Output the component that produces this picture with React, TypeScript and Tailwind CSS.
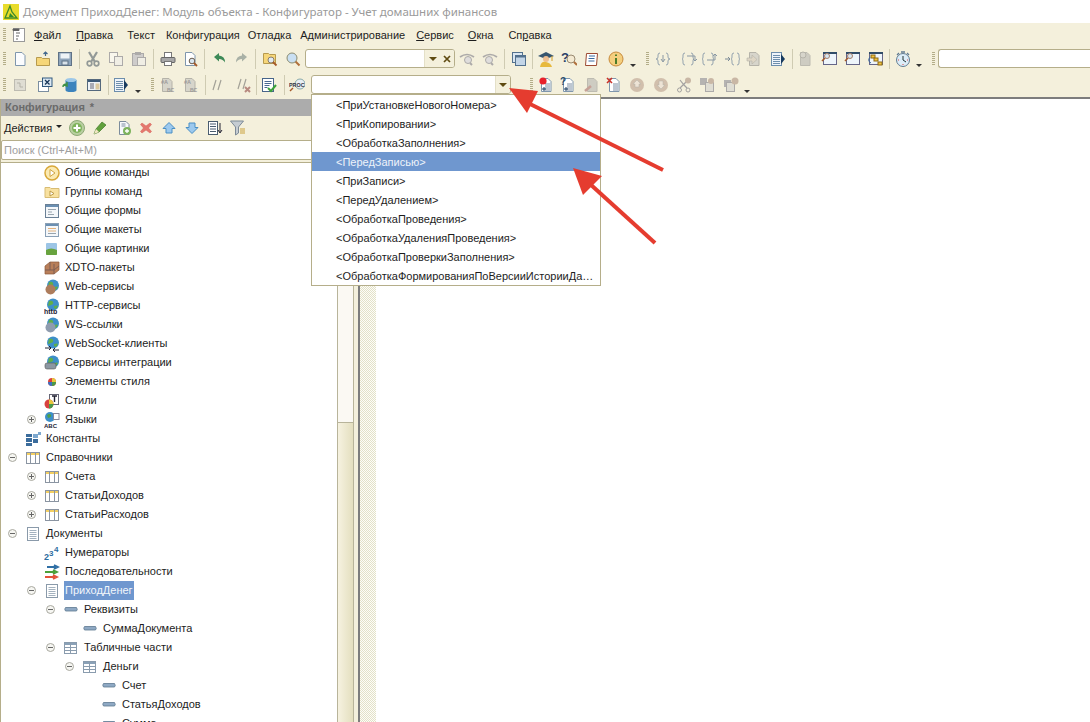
import React from "react";

const F = "font-['Liberation_Sans',sans-serif]";

const Doc = ({ f = "#fff", s = "#7f96ad" }: { f?: string; s?: string }) => (
  <path d="M3.5 1.5h6.5l3 3v10h-9.500z" fill={f} stroke={s} />
);
const Lines = ({ c = "#7d8ea3", x = 5.5, y = 5 }: { c?: string; x?: number; y?: number }) => (
  <path d={`M${x} ${y}h5M${x} ${y + 2}h5M${x} ${y + 4}h5M${x} ${y + 6}h5`} stroke={c} fill="none" />
);
const Lens = ({ c = "#c9dff2", h = "#b0703c" }: { c?: string; h?: string }) => (
  <>
    <path d="M10 10l4.500 4.500" stroke={h} strokeWidth="2" />
    <circle cx="7" cy="7" r="5" fill={c} stroke="#8c8c70" />
  </>
);
const Gray = ({ children }: { children: React.ReactNode }) => <g opacity="0.5">{children}</g>;
const Prop = () => <path d="M2.500 5.500h11q1.500 2-0 3.500h-11q-1.500-2 0-3.500z" fill="#8fa9c4" stroke="#5d7890" strokeWidth="0.8" />;
const TableI = ({ h = "#f3cf62" }: { h?: string }) => (
  <>
    <rect x="1.500" y="2.500" width="13" height="11" fill="#fff" stroke="#8b95a2" />
    <rect x="2" y="3" width="12" height="2" fill={h} />
    <path d="M5.500 3v10M10.500 3v10" stroke="#8b95a2" />
  </>
);
const Globe = () => (
  <>
    <circle cx="9" cy="6.500" r="6" fill="#3d8fc9" />
    <path d="M5 3q3-1 4 1t-2 3-3 1zM10 8q3-1 4 0l-2 3-2-1z" fill="#5fae4a" />
  </>
);

const icons: Record<string, React.ReactNode> = {
  win: <><rect x="1.500" y="1.500" width="11" height="13" fill="#fff" stroke="#999" /><path d="M1 2h6v1.500H1zM4 6h4M4 9h3M4 12h2" fill="#555" stroke="#666" /></>,
  new: <Doc f="#fbfcfe" />,
  open: <><path d="M1.500 6.500h5l1 1h7v7h-13z" fill="#f6d679" stroke="#b79a4e" /><path d="M10.500 5V1M8.500 3l2-2 2 2" stroke="#42688e" fill="none" strokeWidth="1.200" /></>,
  save: <><rect x="1.500" y="1.500" width="13" height="13" fill="#8ea4bb" stroke="#5f7286" /><rect x="3.500" y="2.500" width="9" height="5" fill="#eef3f7" /><rect x="5" y="10" width="6" height="4" fill="#d9e2ea" stroke="#5f7286" /></>,
  cut: <Gray><path d="M4 1l6 10M12 1l-6 10" stroke="#345" strokeWidth="2.200" /><circle cx="4.500" cy="12.500" r="2.300" fill="none" stroke="#345" strokeWidth="1.700" /><circle cx="11.500" cy="12.500" r="2.300" fill="none" stroke="#345" strokeWidth="1.700" /></Gray>,
  copy: <Gray><rect x="1.500" y="1.500" width="8" height="10" fill="#fff" stroke="#667" /><rect x="6.500" y="5.500" width="8" height="9" fill="#eee" stroke="#667" /></Gray>,
  paste: <Gray><rect x="1.500" y="2.500" width="11" height="12" fill="#aab" stroke="#667" /><rect x="4" y="1" width="6" height="3" fill="#667" /><rect x="6.500" y="6.500" width="8" height="8" fill="#eee" stroke="#667" /></Gray>,
  print: <><rect x="4.500" y="1.500" width="7" height="5" fill="#fff" stroke="#777" /><rect x="1" y="6.500" width="14" height="5" rx="1" fill="#a7a7a7" stroke="#666" /><rect x="4.500" y="10.500" width="7" height="4" fill="#fff" stroke="#777" /></>,
  preview: <><Doc /><circle cx="10" cy="10" r="2.800" fill="#d9e6f0" stroke="#6b5b4a" /><path d="M12 12l3 3" stroke="#a55a2a" strokeWidth="1.800" /></>,
  undo: <path d="M2 6l5-4v2.500q6 .5 6 7-2-3.500-6-3.500v2.500z" fill="#3e8a58" />,
  redo: <path d="M14 6l-5-4v2.500q-6 .5-6 7 2-3.500 6-3.500v2.500z" fill="#a9b1a6" />,
  findf: <><path d="M1.500 2.500h5l1 1h6v9h-12z" fill="#f6d679" stroke="#b79a4e" /><circle cx="9" cy="9" r="3" fill="#dfe9f2" stroke="#8a7d6b" /><path d="M11 11l3.500 3.500" stroke="#a55a2a" strokeWidth="1.800" /></>,
  lens: <Lens />,
  fnext: <Gray><path d="M1 6q7-5 14 0" fill="none" stroke="#667" strokeWidth="1.700" /><circle cx="9" cy="9" r="3.500" fill="#ccd" stroke="#667" /><path d="M11 12l2 2" stroke="#667" strokeWidth="2" /></Gray>,
  fprev: <Gray><path d="M1 6q7-5 14 0" fill="none" stroke="#667" strokeWidth="1.700" /><circle cx="7" cy="9" r="3.500" fill="#ccd" stroke="#667" /><path d="M9 12l2 2" stroke="#667" strokeWidth="2" /></Gray>,
  wins: <><rect x="1.500" y="1.500" width="10" height="10" fill="#dbe7f2" stroke="#53718e" /><rect x="4.500" y="4.500" width="10" height="10" fill="#c3d5e7" stroke="#53718e" /><rect x="4.500" y="4.500" width="10" height="2" fill="#53718e" /></>,
  hat: <><path d="M0 5l8-4 8 4-8 3z" fill="#37566f" /><path d="M14 5v5" stroke="#d29c25" /><circle cx="8" cy="8" r="3" fill="#eebf92" /><path d="M2 16q1-6 6-5t6 5z" fill="#e7b93d" /></>,
  qlens: <><text x="0" y="11" fontSize="13" fontWeight="700" fill="#283e66" fontFamily="Liberation Sans">?</text><circle cx="10" cy="8" r="4" fill="#f4ead2" stroke="#9a8a70" /><path d="M13 11l3 3" stroke="#b0703c" strokeWidth="2" /></>,
  book: <><path d="M2.500 14.500l1-12h11l-1 12z" fill="#fff" stroke="#9c4a33" /><path d="M6 5h6M5.500 7.500h6M5.500 10h6" stroke="#3a6aa0" /></>,
  info: <><circle cx="8" cy="8" r="7" fill="#f4cf7e" stroke="#c78a3b" /><path d="M8 3.500v1.500M8 7v6" stroke="#4d7c2a" strokeWidth="2" /></>,
  brIn: <><path d="M5 2q-2 0-2 2v2q0 2-2 2 2 0 2 2v2q0 2 2 2M11 2q2 0 2 2v2q0 2 2 2-2 0-2 2v2q0 2-2 2" fill="none" stroke="#94a3ae" /><path d="M8 4v6M6 8l2 3 2-3" stroke="#8a98a3" fill="none" /></>,
  brOver: <><path d="M4 2q-2 0-2 2v2q0 2-1 2 1 0 1 2v2q0 2 2 2M10 2q2 0 2 2v2q0 2 1 2-1 0-1 2v2q0 2-2 2" fill="none" stroke="#94a3ae" /><path d="M6 5h8v4M12 8l2 2 2-2" stroke="#8a98a3" fill="none" /></>,
  brOut: <><path d="M4 2q-2 0-2 2v2q0 2-1 2 1 0 1 2v2q0 2 2 2M10 2q2 0 2 2v2q0 2 1 2-1 0-1 2v2q0 2-2 2" fill="none" stroke="#94a3ae" /><path d="M6 9h8V4M12 5l2-2 2 2" stroke="#8a98a3" fill="none" /></>,
  brTo: <><path d="M9 2q-2 0-2 2v2q0 2-1 2 1 0 1 2v2q0 2 2 2M12 2q2 0 2 2v2q0 2 1 2-1 0-1 2v2q0 2-2 2" fill="none" stroke="#94a3ae" /><path d="M0 8h4M3 6l2 2-2 2" stroke="#7e8c97" fill="none" /></>,
  docGo: <Gray><Doc f="#bbb" s="#777" /><path d="M1 7h5V4l5 4.500-5 4.500v-3H1z" fill="#c9bdb0" stroke="#777" strokeWidth="0.600" /></Gray>,
  docBlk: <><rect x="1.500" y="1.500" width="10" height="13" fill="#eef4fa" stroke="#6d8eac" /><path d="M3 4.500h7M3 6.500h7M3 8.500h7M3 10.500h7M3 12.500h7" stroke="#6d8eac" /><path d="M11 3l4 5-4 5z" fill="#173a5e" /></>,
  grayLens: <Gray><Doc f="#aaa" s="#888" /><circle cx="6" cy="4" r="3" fill="#bbb" stroke="#777" /></Gray>,
  screen1: <><rect x="2.500" y="1.500" width="13" height="12" fill="#eef5fb" stroke="#668" /><rect x="2" y="1" width="14" height="2" fill="#304c68" /><circle cx="6" cy="5" r="2.500" fill="#d6e6f2" stroke="#a77f6a" /><path d="M4 7L1 10" stroke="#a55a2a" strokeWidth="1.600" /></>,
  chain: <><rect x="2.500" y="1.500" width="13" height="12" fill="#eef5fb" stroke="#668" /><rect x="2" y="1" width="14" height="2" fill="#304c68" /><rect x="4" y="4" width="4" height="3" fill="#f1c33d" stroke="#8d6b16" /><rect x="7" y="7" width="4" height="3" fill="#f1c33d" stroke="#8d6b16" /><rect x="11" y="11" width="4" height="3" fill="#f1c33d" stroke="#8d6b16" /><path d="M3 6q-3 4 1 6" fill="none" stroke="#3a6aa0" /></>,
  clock: <><circle cx="8" cy="9" r="6.500" fill="#dcedf8" stroke="#607b92" /><path d="M8 5v4l3 2" stroke="#233" fill="none" /><path d="M6 1h4M2 4l2-2M14 4l-2-2" stroke="#607b92" strokeWidth="1.300" /><path d="M3 9h1M12 9h1M8 13v1" stroke="#d44" /></>,
  form1: <Gray><rect x="2.500" y="2.500" width="11" height="11" fill="#ccc" stroke="#888" /><path d="M5 6h3v4h3" stroke="#777" fill="none" /></Gray>,
  formX: <><rect x="1.500" y="4.500" width="10" height="10" fill="#fff" stroke="#7b8ea0" /><rect x="5.500" y="1" width="9.500" height="8.500" fill="#dce8f2" stroke="#31587e" /><path d="M8 3l4.500 4.500M12.500 3L8 7.500" stroke="#17365a" strokeWidth="1.300" /></>,
  db: <><path d="M3.500 3v10q0 2 5.500 2t5.500-2V3z" fill="#3c83bd" /><ellipse cx="9" cy="3" rx="5.500" ry="2" fill="#9cc7e8" /><path d="M1 10q0-3 4-3M5 5v4l-3-1" stroke="#3f9146" fill="none" strokeWidth="1.500" /></>,
  form2: <><rect x="1.500" y="2.500" width="13" height="11" fill="#eef2f6" stroke="#55697d" /><rect x="2" y="3" width="12" height="2" fill="#3d5a78" /><path d="M4 7h4M4 9h4M4 11h4" stroke="#667" /><rect x="9.500" y="6.500" width="4" height="6" fill="#dbc9a0" /></>,
  abc: <Gray><Doc f="#bbb" s="#777" /><text x="2" y="7" fontSize="5.500" fontWeight="700" fill="#445" fontFamily="Liberation Sans">#A</text><text x="8" y="15" fontSize="5" fontWeight="700" fill="#445" fontFamily="Liberation Sans">BC</text></Gray>,
  comm: <Gray><path d="M6 3L3 13M11 3L8 13" stroke="#555" strokeWidth="1.200" /></Gray>,
  uncomm: <><Gray><path d="M5 2L2 12M10 2L7 12" stroke="#555" strokeWidth="1.200" /></Gray><path d="M9 10l5 5M14 10l-5 5" stroke="#b88a80" strokeWidth="2" /></>,
  check: <><rect x="1.500" y="1.500" width="11" height="13" fill="#fff" stroke="#48658a" /><path d="M3.500 4.500h7M3.500 6.500h7M3.500 8.500h5M3.500 10.500h3" stroke="#4a6a92" /><path d="M7 11l3 3 5-6" fill="none" stroke="#3aa23a" strokeWidth="2" /></>,
  proc: <><circle cx="11" cy="7" r="5" fill="#e8eef4" stroke="#8aa" /><text x="0" y="10" fontSize="5.400" fontWeight="700" fill="#334" fontFamily="Liberation Sans">PROC</text><path d="M1 14l3-3" stroke="#a55a2a" strokeWidth="1.500" /></>,
  bp: <><Doc /><Lines x={7} y={7} /><circle cx="5" cy="4" r="3.600" fill="#e8202a" /><path d="M4 12h4M6 10v4" stroke="#173a5e" /></>,
  qdoc: <><Doc /><Lines x={7} y={7} /><text x="0" y="8" fontSize="10" fontWeight="700" fill="#28496b" fontFamily="Liberation Sans">?</text><path d="M4 12h4M6 10v4" stroke="#173a5e" /></>,
  gdoc: <Gray><Doc f="#aaa" s="#888" /><path d="M1 14l6-5" stroke="#955" strokeWidth="2.500" /></Gray>,
  xdoc: <><Doc /><Lines x={7} y={7} /><path d="M1 1l5 5M6 1L1 6" stroke="#c8322a" strokeWidth="1.600" /></>,
  cUp: <Gray><circle cx="8" cy="8" r="7" fill="#b08f7e" /><path d="M8 3l4 4H10v3H6V7H4z" fill="#e8d8d0" stroke="#777" strokeWidth="0.500" /></Gray>,
  cDn: <Gray><circle cx="8" cy="8" r="7" fill="#b08f7e" /><path d="M8 12l4-4H10V4H6v4H4z" fill="#e8d8d0" stroke="#777" strokeWidth="0.500" /></Gray>,
  sciss: <Gray><path d="M12 3L4 11M4 3l4 5 3 3" stroke="#556" strokeWidth="1.200" fill="none" /><circle cx="3.500" cy="13" r="2" fill="none" stroke="#556" /><circle cx="12" cy="13" r="2" fill="none" stroke="#556" /><circle cx="12" cy="3.500" r="3" fill="#a08070" /></Gray>,
  multi: <Gray><rect x="1" y="1" width="7" height="7" fill="#778" /><rect x="6.500" y="5.500" width="8" height="9" fill="#ccc" stroke="#667" /><circle cx="12" cy="4" r="3" fill="#a08070" /></Gray>,
  multi2: <Gray><rect x="1" y="3" width="7" height="7" fill="#778" /><rect x="3.500" y="5.500" width="8" height="9" fill="#ccc" stroke="#667" /><circle cx="12" cy="4" r="3.500" fill="#a08070" /></Gray>,
  // action bar
  add: <><circle cx="8" cy="8" r="7.500" fill="#b8cfa0" stroke="#8ea877" /><circle cx="8" cy="8" r="5" fill="#7fb35b" /><path d="M8 4.500v7M4.500 8h7" stroke="#fff" strokeWidth="2" /></>,
  pencil: <><path d="M2 14l2-5 6-7 4 3-7 7z" fill="#62a13d" stroke="#3f7a28" strokeWidth="0.700" /><path d="M2 14l2-5 3 3z" fill="#f2e7c3" /></>,
  copyAdd: <><Doc f="#f6f8fb" s="#7c8c9c" /><path d="M5.500 4h4M5.500 6h4" stroke="#7d8ea3" /><circle cx="11" cy="11" r="4" fill="#7db35d" /><path d="M11 9v4M9 11h4" stroke="#fff" strokeWidth="1.300" /></>,
  del: <path d="M4 3l4 3 4-3 1.500 1.500-3 3.500 3 3.500L12 13 8 10l-4 3-1.500-1.500 3-3.500-3-3.500z" fill="#e4786e" stroke="#d65d52" strokeWidth="0.500" />,
  up: <path d="M8 2.500l6 6h-3v4.500H5V8.500H2z" fill="#9cc9ee" stroke="#4a8fc5" />,
  down: <path d="M8 13.500l6-6h-3V3H5v4.500H2z" fill="#9cc9ee" stroke="#4a8fc5" />,
  sort: <><rect x="1.500" y="1.500" width="9" height="13" fill="#fff" stroke="#4a5d70" /><path d="M3 4h6M3 6.500h6M3 9h6M3 11.500h6" stroke="#4a5d70" /><path d="M13 3v9M11 10l2 3 2-3" fill="none" stroke="#223" /></>,
  filter: <><path d="M0.500 1h13l-5 6v6l-3 2V7z" fill="#c5ccd2" stroke="#7d8a96" /><path d="M10 9h5M10 11h5M10 13h5" stroke="#c9a13c" /></>,
  // tree
  cmd: <><circle cx="8" cy="8" r="7" fill="#fbeab2" stroke="#d8a83a" strokeWidth="1.500" /><path d="M6 4.500l5 3.500-5 3.500z" fill="#fff" stroke="#d0a543" /></>,
  grp: <><path d="M1 3.500h5l1 1h8v9H1z" fill="#f8e1a0" stroke="#d8bc74" /><path d="M6 7l4 2.500L6 12z" fill="#fff" stroke="#bd9a45" /></>,
  frm: <><rect x="1.500" y="1.500" width="13" height="13" fill="#f4f7fa" stroke="#6a8096" /><rect x="2" y="2" width="12" height="2" fill="#6a8fb2" /><path d="M4 6.500h8M4 9h4M4 11.500h6" stroke="#98a4ae" /></>,
  mak: <><rect x="1.500" y="1.500" width="13" height="13" fill="#f4f7fa" stroke="#8aa0b6" /><rect x="2" y="2" width="12" height="2" fill="#6a8fb2" /><path d="M4 6.500h8M4 9h8" stroke="#e3b27c" /><path d="M4 11.500h8" stroke="#98a4ae" /></>,
  pic: <><rect x="2" y="2" width="11" height="12" rx="1" fill="#9cc5e6" /><path d="M2 9q5-3 11 0v4q0 1-1 1H3q-1 0-1-1z" fill="#68a33e" /></>,
  xdto: <><path d="M1 6l5-4h9v8l-5 4H1z" fill="#b87f5a" stroke="#8c5a3a" strokeWidth="0.700" /><path d="M1 10h9l5-4M6 2v8M10 4v10" stroke="#7d5f55" fill="none" /></>,
  web: <><Globe /><circle cx="6.500" cy="10.500" r="5" fill="#ad7c5c" /></>,
  http: <><Globe /><text x="0" y="15.500" fontSize="7" fontWeight="700" fill="#223" fontFamily="Liberation Sans">http</text></>,
  ws: <><Globe /><circle cx="6.500" cy="10.500" r="5" fill="#8f9cae" /></>,
  wsc: <><Globe /><path d="M1 12h6M5 10l2 2-2 2M15 14H9M11 12l-2 2 2 2" stroke="#223" fill="none" /></>,
  intg: <><Globe /><rect x="1" y="8" width="11" height="6" rx="2" fill="#8c97a2" stroke="#555" strokeWidth="0.600" /></>,
  palette: <><circle cx="8" cy="8" r="4" fill="#d8423f" /><path d="M8 4a4 4 0 0 1 4 4H8z" fill="#e8c83c" /><path d="M8 8h4a4 4 0 0 1-4 4z" fill="#4a9a4a" /><path d="M8 8v4a4 4 0 0 1-4-4z" fill="#3e6fc0" /></>,
  styl: <><rect x="5.500" y="1.500" width="9" height="10" fill="#fff" stroke="#667" /><path d="M8 3h5M10.500 3v6" stroke="#223" strokeWidth="1.400" /><circle cx="5" cy="11" r="4.500" fill="#d8423f" /><path d="M5 6.500a4.500 4.500 0 0 1 4.500 4.500H5z" fill="#e8c83c" /><path d="M5 11h4.500A4.500 4.500 0 0 1 5 15.500z" fill="#4a9a4a" /></>,
  lang: <><circle cx="6" cy="5" r="5" fill="#3d8fc9" /><path d="M3 3q3-2 4 0t-3 3z" fill="#4ea04a" /><rect x="9.500" y="1.500" width="5.500" height="6" fill="#fff" stroke="#889" /><text x="0" y="15.500" fontSize="6" fontWeight="700" fill="#223" fontFamily="Liberation Sans">ABC</text></>,
  cnst: <><rect x="1" y="7" width="6" height="4" fill="#3b6c9c" /><rect x="1" y="12" width="6" height="3" fill="#3b6c9c" /><rect x="8" y="3" width="5" height="4" fill="#7da8cf" /><rect x="8" y="8" width="5" height="4" fill="#3b6c9c" /><rect x="1" y="3" width="6" height="3" fill="#3b6c9c" /><rect x="13" y="1" width="3" height="3" fill="#7da8cf" /></>,
  tbl: <TableI />,
  docs: <><rect x="2.500" y="1.500" width="11" height="13" fill="#fff" stroke="#8a9aaa" /><path d="M4.500 4.500h7M4.500 6.500h7M4.500 8.500h7M4.500 10.500h7M4.500 12.500h7" stroke="#a4b2bf" /></>,
  num: <><text x="0" y="15" fontSize="9" fontWeight="700" fill="#2d6ca0" fontFamily="Liberation Sans">2</text><text x="5" y="11" fontSize="8" fontWeight="700" fill="#2d6ca0" fontFamily="Liberation Sans">3</text><text x="10" y="7" fontSize="8" fontWeight="700" fill="#2d6ca0" fontFamily="Liberation Sans">4</text></>,
  seq: <><path d="M3 3h9M10 1l4 2-4 2" stroke="#2f6fa5" fill="none" strokeWidth="1.800" /><path d="M1 8h10M9 6l4 2-4 2" stroke="#4ca03a" fill="none" strokeWidth="1.800" /><path d="M1 13h10M9 11l4 2-4 2" stroke="#e4533a" fill="none" strokeWidth="1.800" /></>,
  prop: <Prop />,
  tch: <><rect x="1.500" y="2.500" width="12" height="11" fill="#fff" stroke="#8a9cae" /><rect x="2" y="3" width="11" height="2" fill="#8aa1b7" /><path d="M7.500 3v10M2 7.500h11M2 10.500h11" stroke="#8a9cae" /></>,
};

const Ic = ({ n, c = "" }: { n: string; c?: string }) => (
  <svg viewBox="0 0 16 16" className={`w-4 h-4 shrink-0 ${c}`}>{icons[n]}</svg>
);
const Grip = ({ c = "" }: { c?: string }) => (
  <div className={`w-[3px] h-[14px] shrink-0 bg-[repeating-linear-gradient(180deg,#b3ad88_0_1px,transparent_1px_2px)] ${c}`} />
);
const Sep = ({ c = "" }: { c?: string }) => <div className={`w-px h-[20px] shrink-0 bg-[#cfcbb2] ${c}`} />;
const Chev = ({ c = "" }: { c?: string }) => (
  <div className={`w-[7px] h-[20px] shrink-0 flex items-end pb-[2px] ${c}`}>
    <div className="w-0 h-0 border-x-[3.500px] border-x-transparent border-t-[3px] border-t-[#333]" />
  </div>
);
const Tri = () => <div className="w-0 h-0 border-x-[4px] border-x-transparent border-t-[4px] border-t-[#5f4b12]" />;

type Item = [string, string];
const row1: Item[] = [
  ["grip", ""], ["new", "ml-[6px]"], ["open", "ml-[7px]"], ["save", "ml-[6px]"], ["sep", "ml-[6px]"],
  ["cut", "ml-[5px]"], ["copy", "ml-[7px]"], ["paste", "ml-[7px]"], ["sep", "ml-[6px]"],
  ["print", "ml-[6px]"], ["preview", "ml-[6px]"], ["sep", "ml-[6px]"], ["undo", "ml-[7px]"], ["redo", "ml-[5px]"], ["sep", "ml-[6px]"],
  ["findf", "ml-[6px]"], ["lens", "ml-[7px]"], ["combo1", "ml-[4px]"], ["fnext", "ml-[4px]"], ["fprev", "ml-[7px]"], ["sep", "ml-[6px]"],
  ["wins", "ml-[6px]"], ["sep", "ml-[5px]"], ["hat", "ml-[5px]"], ["qlens", "ml-[7px]"], ["book", "ml-[6px]"], ["info", "ml-[9px]"], ["chev", "ml-[6px]"],
  ["grip", "ml-[9px]"], ["brIn", "ml-[6px]"], ["brOver", "ml-[10px]"], ["brOut", "ml-[4px]"], ["brTo", "ml-[8px]"], ["docGo", "ml-[5px]"], ["docBlk", "ml-[8px]"], ["sep", "ml-[6px]"],
  ["grayLens", "ml-[4px]"], ["screen1", "ml-[8px]"], ["screen1", "ml-[7px]"], ["chain", "ml-[7px]"], ["sep", "ml-[6px]"], ["clock", "ml-[5px]"], ["chev", "ml-[5px]"],
  ["grip", "ml-[9px]"], ["input", "ml-[3px]"],
];
const row2: Item[] = [
  ["grip", ""], ["form1", "ml-[6px]"], ["formX", "ml-[9px]"], ["db", "ml-[9px]"], ["form2", "ml-[8px]"], ["sep", "ml-[6px]"],
  ["docBlk", "ml-[4px]"], ["chev", "ml-[6px]"], ["grip", "ml-[9px]"], ["abc", "ml-[5px]"], ["abc", "ml-[7px]"], ["sep", "ml-[7px]"],
  ["comm", "ml-[4px]"], ["uncomm", "ml-[10px]"], ["sep", "ml-[4px]"], ["check", "ml-[4px]"], ["sep", "ml-[7px]"], ["proc", "ml-[4px]"],
  ["combo2", "ml-[6px]"], ["grip", "ml-[19px]"], ["bp", "ml-[5px]"], ["qdoc", "ml-[6px]"], ["gdoc", "ml-[8px]"], ["xdoc", "ml-[6px]"],
  ["cUp", "ml-[7px]"], ["cDn", "ml-[8px]"], ["sciss", "ml-[7px]"], ["multi", "ml-[7px]"], ["multi2", "ml-[8px]"], ["chev", "ml-[5px]"],
];

const Tool = ({ n, c }: { n: string; c: string }) => {
  if (n === "grip") return <Grip c={c} />;
  if (n === "sep") return <Sep c={c} />;
  if (n === "chev") return <Chev c={c} />;
  if (n === "combo1")
    return (
      <div className={`${c} w-[150px] h-[19px] shrink-0 flex items-center justify-end bg-white border border-[#b5ae8a] rounded-[3px] overflow-hidden`}>
        <div className="w-[16px] h-full bg-[#f4f0dc] border-l border-[#e4e0c8] flex items-center justify-center"><Tri /></div>
        <div className="w-[14px] h-full bg-[#f4f0dc] flex items-center justify-center">
          <svg viewBox="0 0 8 8" className="w-2 h-2"><path d="M1 1l6 6M7 1L1 7" stroke="#5f4b12" strokeWidth="1.700" /></svg>
        </div>
      </div>
    );
  if (n === "combo2")
    return (
      <div className={`${c} w-[200px] h-[19px] shrink-0 flex items-center justify-end bg-white border border-[#b5ae8a] rounded-[3px] overflow-hidden`}>
        <div className="w-[15px] h-full bg-[#f4f0dc] border-l border-[#e4e0c8] flex items-center justify-center"><Tri /></div>
      </div>
    );
  if (n === "input")
    return <div className={`${c} flex-1 h-[19px] bg-white border border-r-0 border-[#b5ae8a] rounded-l-[3px]`} />;
  return <Ic n={n} c={c} />;
};

const Toolbar = ({ items, c }: { items: Item[]; c: string }) => (
  <div className={`flex items-center pl-[3px] ${c}`}>
    {items.map(([n, m], i) => (
      <Tool key={i} n={n} c={m} />
    ))}
  </div>
);

const Ul = ({ a, u, b, c }: { a?: string; u: string; b: string; c: string }) => (
  <span className={`pt-[1px] ${c}`}>
    {a}
    <span className="underline">{u}</span>
    {b}
  </span>
);

type Row = [string, string, number, ("+" | "-" | "")?, boolean?];
const rows: Row[] = [
  ["cmd", "Общие команды", 1],
  ["grp", "Группы команд", 1],
  ["frm", "Общие формы", 1],
  ["mak", "Общие макеты", 1],
  ["pic", "Общие картинки", 1],
  ["xdto", "XDTO-пакеты", 1],
  ["web", "Web-сервисы", 1],
  ["http", "HTTP-сервисы", 1],
  ["ws", "WS-ссылки", 1],
  ["wsc", "WebSocket-клиенты", 1],
  ["intg", "Сервисы интеграции", 1],
  ["palette", "Элементы стиля", 1],
  ["styl", "Стили", 1],
  ["lang", "Языки", 1, "+"],
  ["cnst", "Константы", 0],
  ["tbl", "Справочники", 0, "-"],
  ["tbl", "Счета", 1, "+"],
  ["tbl", "СтатьиДоходов", 1, "+"],
  ["tbl", "СтатьиРасходов", 1, "+"],
  ["docs", "Документы", 0, "-"],
  ["num", "Нумераторы", 1],
  ["seq", "Последовательности", 1],
  ["docs", "ПриходДенег", 1, "-", true],
  ["prop", "Реквизиты", 2, "-"],
  ["prop", "СуммаДокумента", 3],
  ["tch", "Табличные части", 2, "-"],
  ["tch", "Деньги", 3, "-"],
  ["prop", "Счет", 4],
  ["prop", "СтатьяДоходов", 4],
  ["prop", "Сумма", 4],
];
const indent = ["pl-[24px]", "pl-[43px]", "pl-[62px]", "pl-[81px]", "pl-[100px]"];
const expInd = ["pl-[7px]", "pl-[26px]", "pl-[45px]", "pl-[64px]", "pl-[83px]"];

const Exp = ({ t }: { t: string }) => (
  <div className="w-[9px] h-[9px] rounded-full border border-[#a9a9a0] bg-[#f6f6f2] flex items-center justify-center relative shrink-0">
    <div className="w-[5px] h-px bg-[#666]" />
    {t === "+" && <div className="absolute w-px h-[5px] bg-[#666]" />}
  </div>
);

const TreeRow = ({ r }: { r: Row }) => {
  const [ic, text, lvl, exp, sel] = r;
  return (
    <div className={`h-[19px] flex items-center relative shrink-0 ${indent[lvl]}`}>
      {exp && (
        <div className={`absolute left-0 top-0 h-full flex items-center ${expInd[lvl]}`}>
          <Exp t={exp} />
        </div>
      )}
      <Ic n={ic} />
      <span className={`ml-[4px] px-[1px] h-[19px] leading-[19px] whitespace-nowrap ${sel ? "bg-[#6f97cf] text-[#f2f6fb]" : "text-[#1d1d1d]"}`}>
        {text}
      </span>
    </div>
  );
};

const items = [
  "<ПриУстановкеНовогоНомера>",
  "<ПриКопировании>",
  "<ОбработкаЗаполнения>",
  "<ПередЗаписью>",
  "<ПриЗаписи>",
  "<ПередУдалением>",
  "<ОбработкаПроведения>",
  "<ОбработкаУдаленияПроведения>",
  "<ОбработкаПроверкиЗаполнения>",
  "<ОбработкаФормированияПоВерсииИсторииДанных>",
];

export default function App() {
  return (
    <div className={`relative w-[1090px] h-[722px] overflow-hidden bg-white text-[11px] ${F}`}>
      {/* title */}
      <div className="h-[23px] flex items-center pl-[3px] bg-white">
        <svg viewBox="0 0 16 16" className="w-[16px] h-[16px] shrink-0">
          <rect width="16" height="16" fill="#e8dc2c" />
          <path d="M2 14L7 2l2 6 5 6zM3 14h11" fill="none" stroke="#3f8a2a" strokeWidth="1.300" />
          <path d="M7 9l4 4H6z" fill="#2e8a2e" />
        </svg>
        <span className="ml-[4px] pt-[1px] text-[11.500px] font-['Noto_Sans',sans-serif] text-[#9a9a9a] whitespace-nowrap">
          Документ ПриходДенег: Модуль объекта - Конфигуратор - Учет домашних финансов
        </span>
      </div>
      {/* menu */}
      <div className="h-[23px] bg-[#f4f0dc] flex items-center pl-[3px] text-[#1d1d1d] whitespace-nowrap">
        <Grip />
        <Ic n="win" c="ml-[6px]" />
        <Ul u="Ф" b="айл" c="ml-[6px]" />
        <Ul u="П" b="равка" c="ml-[15px]" />
        <span className="ml-[14px] pt-[1px]">Текст</span>
        <span className="ml-[11px] pt-[1px]">Конфигурация</span>
        <span className="ml-[8px] pt-[1px]">Отладка</span>
        <span className="ml-[9px] pt-[1px]">Администрирование</span>
        <Ul u="С" b="ервис" c="ml-[11px]" />
        <Ul u="О" b="кна" c="ml-[14px]" />
        <Ul a="Сп" u="р" b="авка" c="ml-[15px]" />
      </div>
      <Toolbar items={row1} c="h-[25px] bg-[#f4f0dc]" />
      <Toolbar items={row2} c="h-[26px] pt-[1px] bg-[#f4f0dc]" />
      <div className="h-[2px] bg-[#f4f0dc]">
        <div className="h-full ml-[337px] bg-[#7d7d7d]" />
      </div>

      <div className="flex h-[623px]">
        {/* left panel */}
        <div className="w-[337px] shrink-0 flex flex-col bg-[#f4f0dc] border-l border-[#b5ae8a]">
          <div className="h-[17px] shrink-0 bg-[#acacac] pl-[4px] flex items-center font-bold text-[#6a6a6a] text-[11px]">
            Конфигурация
            <span className="ml-[5px]">*</span>
          </div>
          <div className="h-[24px] shrink-0 flex items-center pl-[3px]">
            <span className="text-[#1d1d1d] pt-[1px]">Действия</span>
            <div className="ml-[4px] mb-[3px] w-0 h-0 border-x-[3px] border-x-transparent border-t-[3px] border-t-[#222]" />
            <Ic n="add" c="ml-[7px]" />
            <Ic n="pencil" c="ml-[7px]" />
            <Ic n="copyAdd" c="ml-[8px]" />
            <Ic n="del" c="ml-[6px]" />
            <Ic n="up" c="ml-[7px]" />
            <Ic n="down" c="ml-[7px]" />
            <Ic n="sort" c="ml-[7px]" />
            <Ic n="filter" c="ml-[7px]" />
          </div>
          <div className="h-[20px] shrink-0 bg-white border border-[#b5ae8a] rounded-[2px] flex items-center pl-[2px] text-[#9e9e9e]">
            Поиск (Ctrl+Alt+M)
          </div>
          <div className="h-[2px] shrink-0" />
          <div className="flex-1 bg-white border-t border-[#b5ae8a] overflow-hidden flex flex-col">
            {rows.map((r, i) => (
              <TreeRow key={i} r={r} />
            ))}
          </div>
        </div>
        {/* scrollbar */}
        <div className="w-[17px] shrink-0 flex flex-col border-x border-[#b8b49a] bg-[#fbf9f3]">
          <div className="h-[323px]" />
          <div className="flex-1 border-t border-[#b8b49a] bg-gradient-to-r from-[#f6f2e0] to-[#e4dfbf]" />
        </div>
        <div className="w-[4px] shrink-0 bg-[#f4f0dc]" />
        <div className="w-[2px] shrink-0 bg-[#7d7d7d]" />
        <div className="w-[16px] shrink-0 bg-[conic-gradient(#e3e1c8_25%,#fdfdf8_0_50%,#e3e1c8_0_75%,#fdfdf8_0)] bg-[length:2px_2px]" />
        <div className="flex-1 bg-white" />
      </div>

      {/* dropdown */}
      <div className="absolute left-[311px] top-[94px] w-[290px] h-[192px] bg-white border border-[#b5ae8a] flex flex-col">
        {items.map((t, i) => (
          <div
            key={i}
            className={`h-[19px] shrink-0 pl-[24px] pr-[2px] leading-[20px] truncate ${i === 3 ? "bg-[#6f97cf] text-[#eef3fa]" : "text-[#1d1d1d]"}`}
          >
            {t}
          </div>
        ))}
      </div>

      {/* red arrows */}
      <svg className="absolute left-0 top-0 w-[1090px] h-[722px] pointer-events-none" viewBox="0 0 1090 722">
        <path d="M663 170L522 100" stroke="#e53c2f" strokeWidth="4" />
        <path d="M509 88L527 113L538 91Z" fill="#e53c2f" />
        <path d="M655 243L590 184" stroke="#e53c2f" strokeWidth="4" />
        <path d="M573 168L583 195L602 176Z" fill="#e53c2f" />
      </svg>
    </div>
  );
}
